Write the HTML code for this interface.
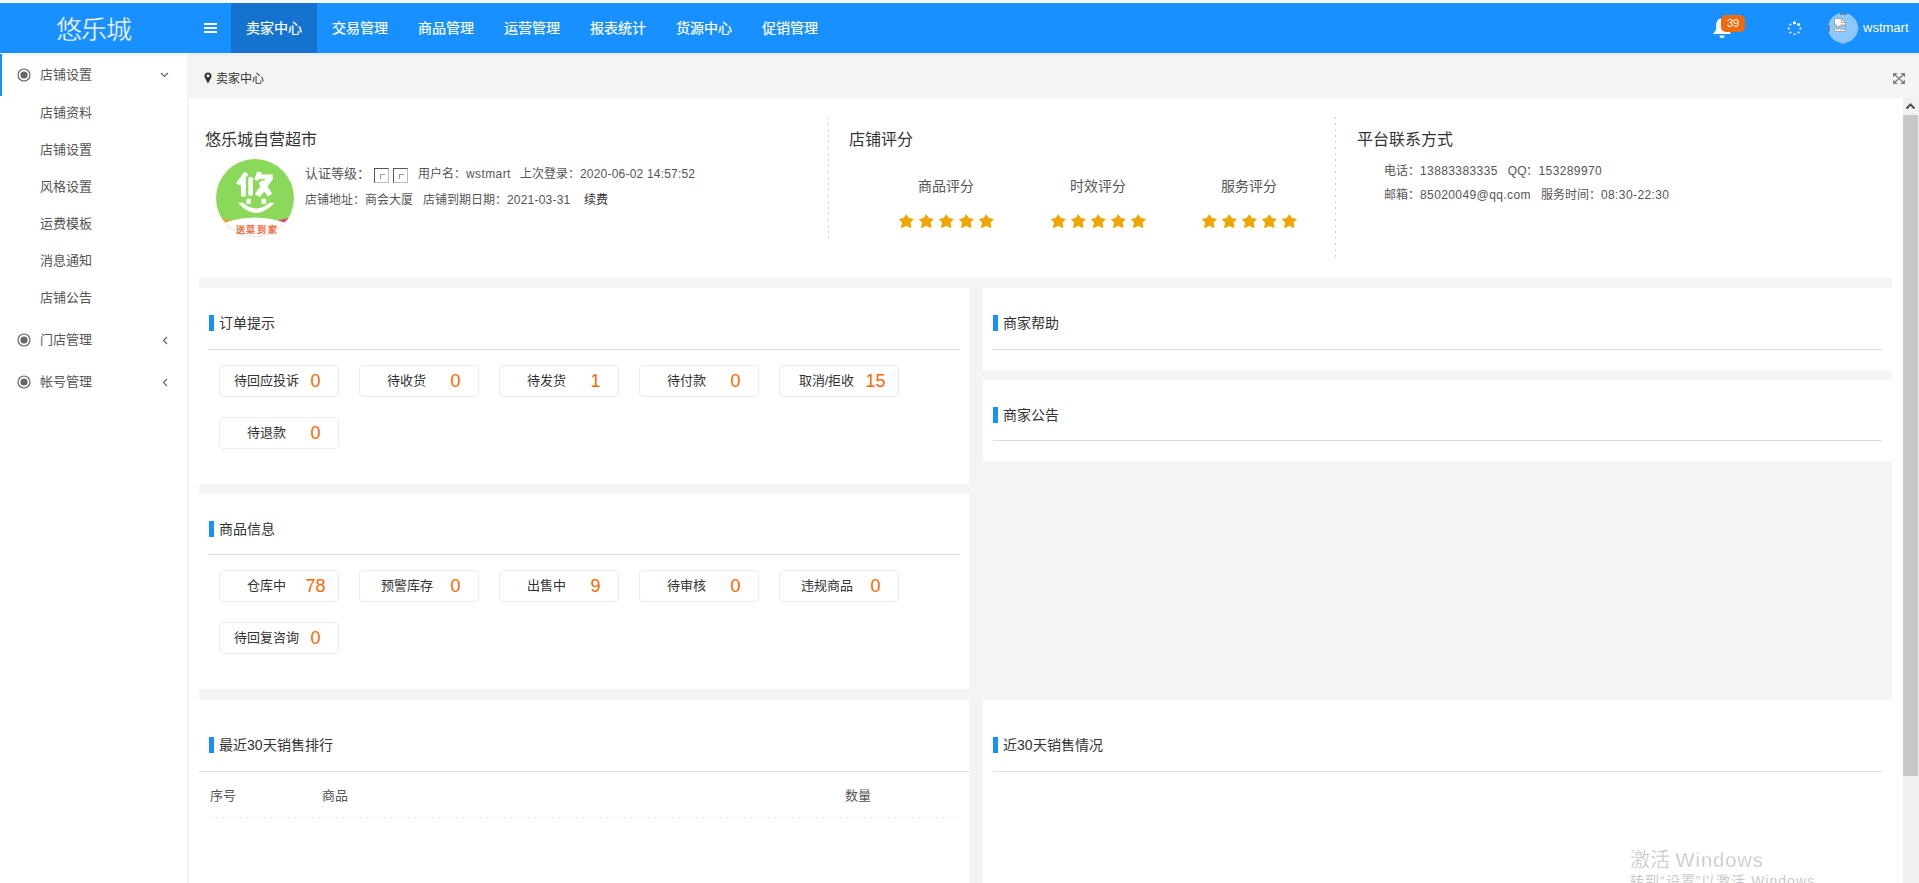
<!DOCTYPE html>
<html lang="zh-CN">
<head>
<meta charset="utf-8">
<style>
*{box-sizing:border-box;margin:0;padding:0}
html,body{width:1919px;height:883px;overflow:hidden;background:#fff;font-family:"Liberation Sans",sans-serif;color:#333}
.a{position:absolute}
.t{position:absolute;white-space:nowrap;line-height:20px}
#topstrip{left:0;top:0;width:1919px;height:3px;background:#f9f9f9}
#hdr{left:0;top:3px;width:1919px;height:50px;background:#1890ff}
#side{left:0;top:53px;width:187px;height:830px;background:#fff}
#crumb{left:187px;top:53px;width:1732px;height:45px;background:#f4f4f4}
#frame{left:189px;top:98px;width:1730px;height:785px;background:#fff}
.nav{color:#fff;font-size:14px;top:18px;-webkit-text-stroke:0.2px #fff}
.sm{font-size:13px;color:#555}
.gray{background:#f4f4f4}
.panel{background:#fff}
.bar{position:absolute;width:5px;height:16px;background:#1890ff}
.ptitle{font-size:14px;color:#333}
.hl{position:absolute;height:1px;background:#dedede}
.box{position:absolute;width:120px;height:32px;border:1px solid #ececec;border-radius:4px;background:#fff}
.box .lb{position:absolute;top:5px;font-size:13px;color:#333;line-height:20px;white-space:nowrap}
.box .nm{position:absolute;top:4px;font-size:18px;color:#f60;line-height:22px;white-space:nowrap}
.star{position:absolute;width:15px;height:15px}
.dg{letter-spacing:0.4px}
</style>
</head>
<body>
<div id="topstrip" class="a"></div>
<div id="hdr" class="a">
<div class="t" style="left:56px;top:1.5px;line-height:50px;font-size:26px;letter-spacing:-1px;-webkit-text-stroke:0.4px #1890ff;color:#fff">悠乐城</div>
<div class="a" style="left:204px;top:20px;width:13px;height:2px;background:#fff"></div>
<div class="a" style="left:204px;top:24px;width:13px;height:2px;background:#fff"></div>
<div class="a" style="left:204px;top:28px;width:13px;height:2px;background:#fff"></div>
<div class="a" style="left:231px;top:0;width:86px;height:50px;background:#1573cf"></div>
<div class="t nav" style="left:246px;top:15px">卖家中心</div>
<div class="t nav" style="left:332px;top:15px">交易管理</div>
<div class="t nav" style="left:418px;top:15px">商品管理</div>
<div class="t nav" style="left:504px;top:15px">运营管理</div>
<div class="t nav" style="left:590px;top:15px">报表统计</div>
<div class="t nav" style="left:676px;top:15px">货源中心</div>
<div class="t nav" style="left:762px;top:15px">促销管理</div>
<svg class="a" style="left:1712px;top:13px" width="20" height="24" viewBox="0 0 20 24">
<path d="M10 2.5 C5.5 2.5 4.2 6 4.2 9 L4.2 13.5 L1 18 L19 18 L15.8 13.5 L15.8 9 C15.8 6 14.5 2.5 10 2.5Z" fill="#fff"/>
<path d="M7.5 19.5 A2.5 2.5 0 0 0 12.5 19.5Z" fill="#fff"/>
</svg>
<div class="a" style="left:1721px;top:12px;width:24px;height:17px;background:#f06a0f;border-radius:5px;color:#fff;font-size:11px;line-height:17px;text-align:center">39</div>
<svg class="a" style="left:1787px;top:18px" width="15" height="15" viewBox="0 0 15 15">
<circle cx="7.5" cy="1.8" r="1.6" fill="#fff"/>
<circle cx="11.6" cy="3.4" r="1.5" fill="#fff"/>
<circle cx="13.3" cy="7.5" r="1.1" fill="#fff"/>
<circle cx="11.6" cy="11.6" r="1" fill="#fff"/>
<circle cx="7.5" cy="13.3" r="1" fill="#fff"/>
<circle cx="3.4" cy="11.6" r="1" fill="#fff"/>
<circle cx="1.7" cy="7.5" r="1" fill="#fff"/>
<circle cx="3.4" cy="3.4" r="1" fill="#fff"/>
</svg>
<div class="a" style="left:1828px;top:10px;width:30px;height:30px;border-radius:50%;background:#8cc8ff"></div>
<svg class="a" style="left:1827px;top:9px" width="32" height="32" viewBox="0 0 32 32"><path d="M13 2.2 A14.3 14.3 0 0 1 19.5 2.2" fill="none" stroke="#4a4a4a" stroke-width="1.1"/><path d="M2.1 13.2 A14.3 14.3 0 0 0 2.1 19.6" fill="none" stroke="#4a4a4a" stroke-width="1.1"/><path d="M13 31 A14.3 14.3 0 0 0 19.5 31" fill="none" stroke="#b5ada5" stroke-width="0.9"/><path d="M30.6 13.2 A14.3 14.3 0 0 1 30.6 19.6" fill="none" stroke="#b5ada5" stroke-width="0.9"/></svg>
<svg class="a" style="left:1834px;top:15px" width="13" height="15" viewBox="0 0 13 15">
<path d="M0.5 0.5 H7.5 L11.5 4.5 V8.6 L10.3 6.6 L9.2 8.4 L7.8 6.2 L6.4 7.6 L3.3 9.2 L2.2 6.6 L0.5 7.4Z" fill="#fff" stroke="#aaa39b" stroke-width="1"/>
<path d="M7.5 0.5 V4.5 H11.5" fill="none" stroke="#aaa39b" stroke-width="1"/>
<path d="M0.5 10.6 L1.8 10 L3.3 12 L5 9.6 L6.6 12 L8.2 10.4 L9.6 12 L11.5 10.6 V13.5 H0.5Z" fill="#fff" stroke="#aaa39b" stroke-width="1"/>
</svg>
<div class="t" style="left:1863px;top:15px;font-size:13px;color:#fff">wstmart</div>
</div>
<div id="side" class="a">
<div class="a" style="left:0;top:1px;width:2px;height:42px;background:#1890ff"></div>
<svg class="a" style="left:17px;top:15px" width="14" height="14" viewBox="0 0 14 14"><circle cx="7" cy="7" r="6" fill="none" stroke="#666" stroke-width="1.2"/><circle cx="7" cy="7" r="3.6" fill="#666"/></svg>
<div class="t sm" style="left:40px;top:12px">店铺设置</div>
<svg class="a" style="left:160px;top:19px" width="9" height="6" viewBox="0 0 9 6"><path d="M1 1 L4.5 4.5 L8 1" fill="none" stroke="#666" stroke-width="1.2"/></svg>
<div class="t sm" style="left:40px;top:50px">店铺资料</div>
<div class="t sm" style="left:40px;top:87px">店铺设置</div>
<div class="t sm" style="left:40px;top:124px">风格设置</div>
<div class="t sm" style="left:40px;top:161px">运费模板</div>
<div class="t sm" style="left:40px;top:198px">消息通知</div>
<div class="t sm" style="left:40px;top:235px">店铺公告</div>
<svg class="a" style="left:17px;top:280px" width="14" height="14" viewBox="0 0 14 14"><circle cx="7" cy="7" r="6" fill="none" stroke="#666" stroke-width="1.2"/><circle cx="7" cy="7" r="3.6" fill="#666"/></svg>
<div class="t sm" style="left:40px;top:277px">门店管理</div>
<svg class="a" style="left:162px;top:283px" width="6" height="9" viewBox="0 0 6 9"><path d="M5 1 L1.5 4.5 L5 8" fill="none" stroke="#666" stroke-width="1.2"/></svg>
<svg class="a" style="left:17px;top:322px" width="14" height="14" viewBox="0 0 14 14"><circle cx="7" cy="7" r="6" fill="none" stroke="#666" stroke-width="1.2"/><circle cx="7" cy="7" r="3.6" fill="#666"/></svg>
<div class="t sm" style="left:40px;top:319px">帐号管理</div>
<svg class="a" style="left:162px;top:325px" width="6" height="9" viewBox="0 0 6 9"><path d="M5 1 L1.5 4.5 L5 8" fill="none" stroke="#666" stroke-width="1.2"/></svg>
</div>
<div id="crumb" class="a">
<svg class="a" style="left:17px;top:19px" width="8" height="12" viewBox="0 0 8 12"><path d="M4 0.4 C1.9 0.4 0.4 2 0.4 3.9 C0.4 5.6 4 11.2 4 11.2 C4 11.2 7.6 5.6 7.6 3.9 C7.6 2 6.1 0.4 4 0.4Z M4 2.3 A1.5 1.5 0 1 1 4 5.3 A1.5 1.5 0 1 1 4 2.3Z" fill="#333" fill-rule="evenodd"/></svg>
<div class="t" style="left:29px;top:16px;font-size:12px;color:#333">卖家中心</div>
<svg class="a" style="left:1706px;top:20px" width="12" height="11" viewBox="0 0 12 11"><path d="M1.5 1.5 L10.5 9.5 M10.5 1.5 L1.5 9.5" stroke="#808080" stroke-width="1.3"/><path d="M0 0 H4.8 L0 4.2Z M12 0 V4.2 L7.2 0Z M0 11 V6.8 L4.8 11Z M12 11 H7.2 L12 6.8Z" fill="#808080"/></svg>
</div>
<div id="frame" class="a"></div>
<div class="a" style="left:0;top:53px;width:1919px;height:5px;background:linear-gradient(to bottom,rgba(0,0,0,0.045),rgba(0,0,0,0))"></div>
<div class="a" style="left:187px;top:98px;width:2px;height:785px;background:#f4f4f4"></div>
<div class="t" style="left:205px;top:130px;font-size:16px;color:#333">悠乐城自营超市</div>
<svg class="a" style="left:216px;top:159px" width="78" height="78" viewBox="0 0 78 78">
<defs><clipPath id="lc"><circle cx="39" cy="39" r="39"/></clipPath></defs>
<g clip-path="url(#lc)">
<rect width="78" height="78" fill="#8bd95b"/>
<path d="M4 58.8 L16.5 62 L8 65Z" fill="#ee9a1c"/>
<path d="M74 58.8 L61.5 61.5 L70 64.5Z" fill="#e03a6c"/>
<path d="M0 66 L6 64.4 Q39 52.4 72 64.4 L78 66 L78 78 L0 78Z" fill="#fff"/>
<path d="M20.2 24.2 L28.2 12.8 L32.4 15 L24.6 26.8Z" fill="#fff"/>
<rect x="25" y="19.9" width="4.9" height="17.6" fill="#fff"/>
<rect x="32.3" y="17.7" width="4.6" height="19.3" rx="2" fill="#fff"/>
<path d="M41.2 12.6 L46 13.6 L42.2 21.8 L38.2 20.6Z" fill="#fff"/>
<rect x="41.6" y="15.5" width="15.2" height="4.4" fill="#fff"/>
<path d="M52 16 L57.5 19 L44.2 38 L38.8 35.2Z" fill="#fff"/>
<path d="M42.6 24.2 L46.8 21 L56.2 34.6 L52 37.8Z" fill="#fff"/>
<rect x="30.4" y="39.5" width="4.6" height="5.4" rx="1.5" fill="#fff"/>
<rect x="45.4" y="39.5" width="4.8" height="5.4" rx="1.5" fill="#fff"/>
<path d="M22 43.8 Q40.2 64.4 58.4 43.8 L53.5 43.8 Q40.2 55.2 26.9 43.8Z" fill="#fff"/>
</g>
<circle cx="39" cy="39" r="38.6" fill="none" stroke="#e6e6e6" stroke-width="0.8" clip-path="url(#lb)"/>
<defs><clipPath id="lb"><rect x="0" y="60" width="78" height="18"/></clipPath></defs>
<text x="19.5" y="74" font-size="9" fill="#f26a3a" stroke="#f26a3a" stroke-width="0.35" font-family="Liberation Sans,sans-serif" letter-spacing="1.9">送菜到家</text>
</svg>
<div class="t" style="left:305px;top:164px;font-size:13px;color:#555">认证等级：</div>
<div class="a" style="left:374px;top:168px;width:15px;height:15px;border:1px solid;border-color:#555 #bbb #bbb #555"><div class="a" style="left:5px;top:5px;width:5px;height:5px;border-left:1px solid #999;border-top:1px solid #999"></div></div>
<div class="a" style="left:393px;top:168px;width:15px;height:15px;border:1px solid;border-color:#555 #bbb #bbb #555"><div class="a" style="left:5px;top:5px;width:5px;height:5px;border-left:1px solid #999;border-top:1px solid #999"></div></div>
<div class="t" style="left:418px;top:164px;font-size:12px;color:#555">用户名：<span style="letter-spacing:0.4px">wstmart</span></div>
<div class="t" style="left:520px;top:164px;font-size:12px;color:#555">上次登录：<span style="letter-spacing:0.2px">2020-06-02 14:57:52</span></div>
<div class="t" style="left:305px;top:190px;font-size:12px;color:#555">店铺地址：商会大厦</div>
<div class="t" style="left:423px;top:190px;font-size:12px;color:#555">店铺到期日期：<span style="letter-spacing:0.2px">2021-03-31</span></div>
<div class="t" style="left:584px;top:190px;font-size:12px;color:#333">续费</div>
<div class="a" style="left:828px;top:117px;height:121px;width:1px;background:repeating-linear-gradient(to bottom,#cdcdcd 0,#cdcdcd 2px,transparent 2px,transparent 6px)"></div>
<div class="a" style="left:1335px;top:117px;height:142px;width:1px;background:repeating-linear-gradient(to bottom,#cdcdcd 0,#cdcdcd 2px,transparent 2px,transparent 6px)"></div>
<div class="t" style="left:849px;top:130px;font-size:16px;color:#333">店铺评分</div>
<div class="t" style="left:896px;width:100px;text-align:center;top:176px;font-size:14px;color:#555">商品评分</div>
<svg class="star" style="left:899px;top:214px" viewBox="0 0 15 15"><path d="M7.3 0.7 L9.7 4.6 L14.2 5.3 L11.1 8.6 L12 13.6 L7.3 11.4 L2.6 13.6 L3.5 8.6 L0.5 5.3 L4.9 4.6Z" fill="#f0a600" stroke="#f0a600" stroke-width="1" stroke-linejoin="round"/></svg>
<svg class="star" style="left:919px;top:214px" viewBox="0 0 15 15"><path d="M7.3 0.7 L9.7 4.6 L14.2 5.3 L11.1 8.6 L12 13.6 L7.3 11.4 L2.6 13.6 L3.5 8.6 L0.5 5.3 L4.9 4.6Z" fill="#f0a600" stroke="#f0a600" stroke-width="1" stroke-linejoin="round"/></svg>
<svg class="star" style="left:939px;top:214px" viewBox="0 0 15 15"><path d="M7.3 0.7 L9.7 4.6 L14.2 5.3 L11.1 8.6 L12 13.6 L7.3 11.4 L2.6 13.6 L3.5 8.6 L0.5 5.3 L4.9 4.6Z" fill="#f0a600" stroke="#f0a600" stroke-width="1" stroke-linejoin="round"/></svg>
<svg class="star" style="left:959px;top:214px" viewBox="0 0 15 15"><path d="M7.3 0.7 L9.7 4.6 L14.2 5.3 L11.1 8.6 L12 13.6 L7.3 11.4 L2.6 13.6 L3.5 8.6 L0.5 5.3 L4.9 4.6Z" fill="#f0a600" stroke="#f0a600" stroke-width="1" stroke-linejoin="round"/></svg>
<svg class="star" style="left:979px;top:214px" viewBox="0 0 15 15"><path d="M7.3 0.7 L9.7 4.6 L14.2 5.3 L11.1 8.6 L12 13.6 L7.3 11.4 L2.6 13.6 L3.5 8.6 L0.5 5.3 L4.9 4.6Z" fill="#f0a600" stroke="#f0a600" stroke-width="1" stroke-linejoin="round"/></svg>
<div class="t" style="left:1048px;width:100px;text-align:center;top:176px;font-size:14px;color:#555">时效评分</div>
<svg class="star" style="left:1051px;top:214px" viewBox="0 0 15 15"><path d="M7.3 0.7 L9.7 4.6 L14.2 5.3 L11.1 8.6 L12 13.6 L7.3 11.4 L2.6 13.6 L3.5 8.6 L0.5 5.3 L4.9 4.6Z" fill="#f0a600" stroke="#f0a600" stroke-width="1" stroke-linejoin="round"/></svg>
<svg class="star" style="left:1071px;top:214px" viewBox="0 0 15 15"><path d="M7.3 0.7 L9.7 4.6 L14.2 5.3 L11.1 8.6 L12 13.6 L7.3 11.4 L2.6 13.6 L3.5 8.6 L0.5 5.3 L4.9 4.6Z" fill="#f0a600" stroke="#f0a600" stroke-width="1" stroke-linejoin="round"/></svg>
<svg class="star" style="left:1091px;top:214px" viewBox="0 0 15 15"><path d="M7.3 0.7 L9.7 4.6 L14.2 5.3 L11.1 8.6 L12 13.6 L7.3 11.4 L2.6 13.6 L3.5 8.6 L0.5 5.3 L4.9 4.6Z" fill="#f0a600" stroke="#f0a600" stroke-width="1" stroke-linejoin="round"/></svg>
<svg class="star" style="left:1111px;top:214px" viewBox="0 0 15 15"><path d="M7.3 0.7 L9.7 4.6 L14.2 5.3 L11.1 8.6 L12 13.6 L7.3 11.4 L2.6 13.6 L3.5 8.6 L0.5 5.3 L4.9 4.6Z" fill="#f0a600" stroke="#f0a600" stroke-width="1" stroke-linejoin="round"/></svg>
<svg class="star" style="left:1131px;top:214px" viewBox="0 0 15 15"><path d="M7.3 0.7 L9.7 4.6 L14.2 5.3 L11.1 8.6 L12 13.6 L7.3 11.4 L2.6 13.6 L3.5 8.6 L0.5 5.3 L4.9 4.6Z" fill="#f0a600" stroke="#f0a600" stroke-width="1" stroke-linejoin="round"/></svg>
<div class="t" style="left:1199px;width:100px;text-align:center;top:176px;font-size:14px;color:#555">服务评分</div>
<svg class="star" style="left:1202px;top:214px" viewBox="0 0 15 15"><path d="M7.3 0.7 L9.7 4.6 L14.2 5.3 L11.1 8.6 L12 13.6 L7.3 11.4 L2.6 13.6 L3.5 8.6 L0.5 5.3 L4.9 4.6Z" fill="#f0a600" stroke="#f0a600" stroke-width="1" stroke-linejoin="round"/></svg>
<svg class="star" style="left:1222px;top:214px" viewBox="0 0 15 15"><path d="M7.3 0.7 L9.7 4.6 L14.2 5.3 L11.1 8.6 L12 13.6 L7.3 11.4 L2.6 13.6 L3.5 8.6 L0.5 5.3 L4.9 4.6Z" fill="#f0a600" stroke="#f0a600" stroke-width="1" stroke-linejoin="round"/></svg>
<svg class="star" style="left:1242px;top:214px" viewBox="0 0 15 15"><path d="M7.3 0.7 L9.7 4.6 L14.2 5.3 L11.1 8.6 L12 13.6 L7.3 11.4 L2.6 13.6 L3.5 8.6 L0.5 5.3 L4.9 4.6Z" fill="#f0a600" stroke="#f0a600" stroke-width="1" stroke-linejoin="round"/></svg>
<svg class="star" style="left:1262px;top:214px" viewBox="0 0 15 15"><path d="M7.3 0.7 L9.7 4.6 L14.2 5.3 L11.1 8.6 L12 13.6 L7.3 11.4 L2.6 13.6 L3.5 8.6 L0.5 5.3 L4.9 4.6Z" fill="#f0a600" stroke="#f0a600" stroke-width="1" stroke-linejoin="round"/></svg>
<svg class="star" style="left:1282px;top:214px" viewBox="0 0 15 15"><path d="M7.3 0.7 L9.7 4.6 L14.2 5.3 L11.1 8.6 L12 13.6 L7.3 11.4 L2.6 13.6 L3.5 8.6 L0.5 5.3 L4.9 4.6Z" fill="#f0a600" stroke="#f0a600" stroke-width="1" stroke-linejoin="round"/></svg>
<div class="t" style="left:1357px;top:130px;font-size:16px;color:#333">平台联系方式</div>
<div class="t" style="left:1384px;top:161px;font-size:12px;color:#555">电话：<span class="dg">13883383335</span>&nbsp;&nbsp;&nbsp;QQ：<span class="dg">153289970</span></div>
<div class="t" style="left:1384px;top:185px;font-size:12px;color:#555">邮箱：<span class="dg">85020049@qq.com</span>&nbsp;&nbsp;&nbsp;服务时间：<span class="dg">08:30-22:30</span></div>
<div class="a gray" style="left:199px;top:278px;width:1693px;height:422px"></div>
<div class="a gray" style="left:969px;top:700px;width:14px;height:183px"></div>
<div class="a panel" style="left:199px;top:288px;width:770px;height:196px"></div>
<div class="bar" style="left:209px;top:315px"></div>
<div class="t ptitle" style="left:219px;top:313px">订单提示</div>
<div class="hl" style="left:209px;top:349px;width:750px"></div>
<div class="box" style="left:219px;top:365px"><div class="lb" style="left:-1px;width:95px;text-align:center">待回应投诉</div><div class="nm" style="left:71px;width:49px;text-align:center">0</div></div>
<div class="box" style="left:359px;top:365px"><div class="lb" style="left:-1px;width:95px;text-align:center">待收货</div><div class="nm" style="left:71px;width:49px;text-align:center">0</div></div>
<div class="box" style="left:499px;top:365px"><div class="lb" style="left:-1px;width:95px;text-align:center">待发货</div><div class="nm" style="left:71px;width:49px;text-align:center">1</div></div>
<div class="box" style="left:639px;top:365px"><div class="lb" style="left:-1px;width:95px;text-align:center">待付款</div><div class="nm" style="left:71px;width:49px;text-align:center">0</div></div>
<div class="box" style="left:779px;top:365px"><div class="lb" style="left:-1px;width:95px;text-align:center">取消/拒收</div><div class="nm" style="left:71px;width:49px;text-align:center">15</div></div>
<div class="box" style="left:219px;top:417px"><div class="lb" style="left:-1px;width:95px;text-align:center">待退款</div><div class="nm" style="left:71px;width:49px;text-align:center">0</div></div>
<div class="a panel" style="left:199px;top:494px;width:770px;height:195px"></div>
<div class="bar" style="left:209px;top:521px"></div>
<div class="t ptitle" style="left:219px;top:519px">商品信息</div>
<div class="hl" style="left:209px;top:554px;width:750px"></div>
<div class="box" style="left:219px;top:570px"><div class="lb" style="left:-1px;width:95px;text-align:center">仓库中</div><div class="nm" style="left:71px;width:49px;text-align:center">78</div></div>
<div class="box" style="left:359px;top:570px"><div class="lb" style="left:-1px;width:95px;text-align:center">预警库存</div><div class="nm" style="left:71px;width:49px;text-align:center">0</div></div>
<div class="box" style="left:499px;top:570px"><div class="lb" style="left:-1px;width:95px;text-align:center">出售中</div><div class="nm" style="left:71px;width:49px;text-align:center">9</div></div>
<div class="box" style="left:639px;top:570px"><div class="lb" style="left:-1px;width:95px;text-align:center">待审核</div><div class="nm" style="left:71px;width:49px;text-align:center">0</div></div>
<div class="box" style="left:779px;top:570px"><div class="lb" style="left:-1px;width:95px;text-align:center">违规商品</div><div class="nm" style="left:71px;width:49px;text-align:center">0</div></div>
<div class="box" style="left:219px;top:622px"><div class="lb" style="left:-1px;width:95px;text-align:center">待回复咨询</div><div class="nm" style="left:71px;width:49px;text-align:center">0</div></div>
<div class="a panel" style="left:983px;top:288px;width:909px;height:82px"></div>
<div class="bar" style="left:993px;top:315px"></div>
<div class="t ptitle" style="left:1003px;top:313px">商家帮助</div>
<div class="hl" style="left:993px;top:349px;width:889px"></div>
<div class="a panel" style="left:983px;top:380px;width:909px;height:81px"></div>
<div class="bar" style="left:993px;top:407px"></div>
<div class="t ptitle" style="left:1003px;top:405px">商家公告</div>
<div class="hl" style="left:993px;top:440px;width:889px"></div>
<div class="a panel" style="left:199px;top:700px;width:770px;height:183px"></div>
<div class="bar" style="left:209px;top:737px"></div>
<div class="t ptitle" style="left:219px;top:735px">最近30天销售排行</div>
<div class="hl" style="left:199px;top:771px;width:770px"></div>
<div class="t sm" style="left:210px;top:786px;color:#555">序号</div>
<div class="t sm" style="left:322px;top:786px;color:#555">商品</div>
<div class="t sm" style="left:845px;top:786px;color:#555">数量</div>
<div class="a" style="left:210px;top:817px;width:749px;height:1px;background:repeating-linear-gradient(to right,#e6e6e6 0,#e6e6e6 2px,transparent 2px,transparent 6px)"></div>
<div class="a panel" style="left:983px;top:700px;width:909px;height:183px"></div>
<div class="bar" style="left:993px;top:737px"></div>
<div class="t ptitle" style="left:1003px;top:735px">近30天销售情况</div>
<div class="hl" style="left:993px;top:771px;width:889px"></div>
<div class="a" style="left:1903px;top:98px;width:16px;height:785px;background:#f1f1f1"></div>
<svg class="a" style="left:1902px;top:98px" width="17" height="17" viewBox="0 0 17 17"><path d="M4.5 10.5 L8.5 6.5 L12.5 10.5" fill="none" stroke="#505050" stroke-width="2"/></svg>
<div class="a" style="left:1903px;top:115px;width:15px;height:661px;background:#c8c8c8"></div>
<div class="t" style="left:1630px;top:847.5px;font-size:20px;line-height:24px;color:rgba(150,150,150,0.6);-webkit-text-stroke:0.3px #fff">激活 <span style="letter-spacing:1px">Windows</span></div>
<div class="t" style="left:1630px;top:871px;font-size:14px;line-height:20px;letter-spacing:1px;color:rgba(150,150,150,0.55)">转到“设置”以激活 Windows。</div>
</body>
</html>
